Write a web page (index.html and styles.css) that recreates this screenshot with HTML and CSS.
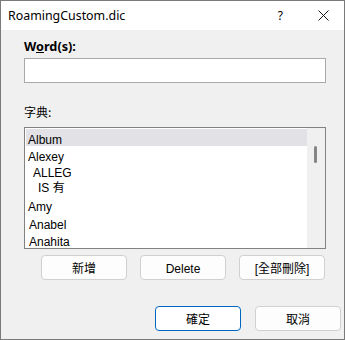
FILE: index.html
```html
<!DOCTYPE html>
<html lang="zh-Hant">
<head>
    <meta charset="UTF-8">
    <title>RoamingCustom.dic</title>
    <link rel="stylesheet" href="styles.css">
</head>
<body>

    <div class="dialog">
        <div class="titlebar">
            <span class="title">RoamingCustom.dic</span>
            <span class="help">?</span>
            <svg class="close" width="11" height="11" viewBox="0 0 11 11">
                <path d="M0.5 0.5 L10.5 10.5 M10.5 0.5 L0.5 10.5" stroke="#1a1a1a" stroke-width="1" fill="none"/>
            </svg>
        </div>

        <div class="content">
            <div class="label bold">W<u>o</u>rd(s):</div>
            <div class="input"></div>

            <div class="label dict">字典:</div>
            <div class="listbox">
                <div class="items">
                    <div class="item selected">Album</div>
                    <div class="item">Alexey</div>
                    <div class="item indent1">ALLEG</div>
                    <div class="item indent2">IS 有</div>
                    <div class="item amy">Amy</div>
                    <div class="item shift">Anabel</div>
                    <div class="item shift">Anahita</div>
                </div>
                <div class="scrollbar">
                    <div class="thumb"></div>
                </div>
            </div>

            <div class="actions">
                <div class="btn">新增</div>
                <div class="btn latin">Delete</div>
                <div class="btn">[全部刪除]</div>
            </div>
        </div>

        <div class="footer">
            <div class="btn default">確定</div>
            <div class="btn">取消</div>
        </div>
    </div>

</body>
</html>
```

FILE: styles.css
```css
body {
    margin: 0;
    font-family: "Noto Sans", "Noto Sans CJK TC", sans-serif;
    font-size: 12px;
    color: #000;
    background: #f0f0f0;
}

.dialog {
    width: 345px;
    height: 340px;
    box-sizing: border-box;
    border: 1px solid #7a7a7a;
    background: #f0f0f0;
    display: flex;
    flex-direction: column;
}

/* barra del titolo */
.titlebar {
    height: 29px;
    background: #fff;
    display: flex;
    align-items: center;
    padding-left: 7px;
}

.title {
    font-size: 12.4px;
    flex: 1;
}

.help {
    font-size: 12px;
    margin-right: 35px;
}

.close {
    margin-right: 15px;
}

.content {
    padding: 0 18px 0 23px;
}

.label {
    height: 18px;
    line-height: 18px;
    margin-top: 7px;
}

.bold {
    font-weight: bold;
    font-size: 12.7px;
}

.dict {
    margin-top: 20px;
    font-family: "Noto Sans CJK TC", sans-serif;
}

.input {
    margin-top: 3px;
    height: 25px;
    box-sizing: border-box;
    border: 1px solid #a9a9a9;
    background: #fff;
}

.listbox {
    margin-top: 6px;
    height: 122px;
    box-sizing: border-box;
    border: 1px solid #828282;
    background: #fff;
    display: flex;
    padding: 1px 0 0 1px;
    overflow: hidden;
}

.items {
    flex: 1;
    font-family: "Liberation Sans", Arial, "Noto Sans CJK TC", sans-serif;
    font-size: 12px;
}

/* il testo sta in fondo alla riga */
.item {
    height: 17px;
    box-sizing: border-box;
    padding-top: 4px;
    line-height: 14px;
    padding-left: 2px;
}

.item.selected {
    background: #e1e1e6;
}

.indent1 {
    padding-left: 7px;
    padding-top: 2.5px;
}

.indent2 {
    padding-left: 12px;
    padding-top: 1px;
}

.amy {
    padding-top: 3px;
}

.shift {
    padding-left: 3px;
}

.scrollbar {
    width: 18px;
    margin-top: -1px;
    background: #f0f0f0;
    position: relative;
}

.thumb {
    position: absolute;
    left: 7px;
    top: 18px;
    width: 3px;
    height: 17px;
    border-radius: 2px;
    background: #858585;
}

.actions {
    display: flex;
    gap: 13px;
    margin-top: 6px;
    padding-left: 17px;
}

.btn {
    width: 86px;
    height: 25px;
    box-sizing: border-box;
    border: 1px solid #d0d0d0;
    border-radius: 4px;
    background: #fdfdfd;
    display: flex;
    justify-content: center;
    align-items: center;
    font-family: "Liberation Sans", Arial, "Noto Sans CJK TC", sans-serif;
    font-size: 12px;
}

.btn.latin {
    padding-top: 3px;
}

.footer {
    display: flex;
    justify-content: flex-end;
    gap: 14px;
    margin-top: 26px;
    padding-right: 3px;
}

.btn.default {
    border: 1px solid #0067c0;
    background: #fff;
}
```
